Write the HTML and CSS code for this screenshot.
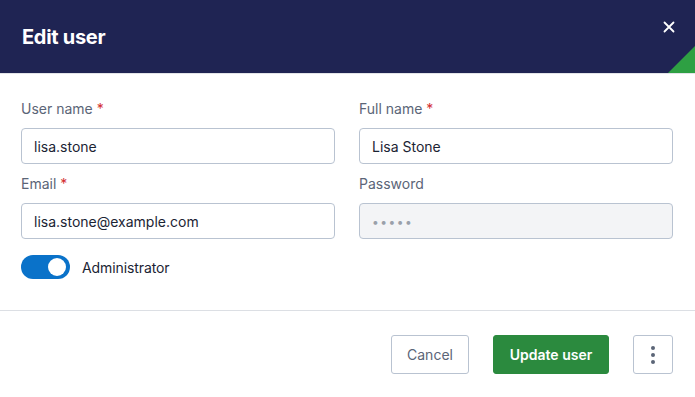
FILE: index.html
```html
<!DOCTYPE html>
<html>
<head>
<meta charset="utf-8">
<link rel="stylesheet" href="styles.css">
</head>
<body>
<div class="modal">
  <header class="modal-header">
    <h1 class="title">Edit user</h1>
    <button class="close" aria-label="Close">
      <svg width="12" height="12" viewBox="0 0 12 12"><path d="M1.5 1.5 L10.5 10.5 M10.5 1.5 L1.5 10.5" stroke="#fff" stroke-width="1.8" stroke-linecap="round"/></svg>
    </button>
    <span class="corner"></span>
  </header>
  <section class="modal-body">
    <div class="grid">
      <div class="field">
        <label class="label">User name <span class="req">*</span></label>
        <div class="input">lisa.stone</div>
      </div>
      <div class="field">
        <label class="label">Full name <span class="req">*</span></label>
        <div class="input">Lisa Stone</div>
      </div>
      <div class="field">
        <label class="label">Email <span class="req">*</span></label>
        <div class="input">lisa.stone@example.com</div>
      </div>
      <div class="field">
        <label class="label">Password</label>
        <div class="input disabled"><span class="dots">•••••</span></div>
      </div>
    </div>
    <div class="toggle-row">
      <span class="toggle"><span class="knob"></span></span>
      <span class="toggle-label">Administrator</span>
    </div>
  </section>
  <footer class="modal-footer">
    <button class="btn btn-secondary">Cancel</button>
    <button class="btn btn-primary">Update user</button>
    <button class="btn btn-icon" aria-label="More">
      <svg width="4" height="18" viewBox="0 0 4 18"><circle cx="2" cy="2" r="2" fill="#5b6577"/><circle cx="2" cy="9" r="2" fill="#5b6577"/><circle cx="2" cy="16" r="2" fill="#5b6577"/></svg>
    </button>
  </footer>
</div>
</body>
</html>
```

FILE: styles.css
```css
* { box-sizing: border-box; }
html, body { margin: 0; padding: 0; background: #fff; }
body { font-family: Inter, "Noto Sans", sans-serif; width: 695px; height: 397px; overflow: hidden; }
.modal { width: 695px; }
.modal-header {
  position: relative;
  height: 74px;
  background: #1f2453;
  border-bottom: 1px solid #e2e4e8;
  display: flex;
  align-items: center;
  padding: 0 22px;
  overflow: hidden;
}
.title {
  margin: 0;
  color: #fff;
  font-size: 20px;
  font-weight: 700;
  letter-spacing: -0.3px;
  line-height: 24px;
}
.close {
  position: absolute;
  top: 20px;
  right: 19px;
  width: 14px;
  height: 14px;
  padding: 0;
  border: 0;
  background: transparent;
  display: flex;
  align-items: center;
  justify-content: center;
}
.corner {
  position: absolute;
  right: 0;
  bottom: 0;
  width: 0;
  height: 0;
  border-style: solid;
  border-width: 0 0 27px 27px;
  border-color: transparent transparent #2ea043 transparent;
}
.modal-body {
  padding: 25px 22px 31px 21px;
  border-bottom: 1px solid #dcdfe4;
}
.grid {
  display: grid;
  grid-template-columns: 314px 314px;
  column-gap: 24px;
  row-gap: 10px;
}
.field { display: flex; flex-direction: column; }
.label {
  font-size: 14px;
  line-height: 20px;
  color: #5b6577;
  margin-bottom: 9px;
}
.req { color: #d32f2f; }
.input {
  height: 36px;
  border: 1px solid #b9c3d1;
  border-radius: 4px;
  padding: 0 12px;
  display: flex;
  align-items: center;
  font-size: 14px;
  color: #1b2434;
  background: #fff;
}
.input.disabled { background: #f3f4f6; }
.dots { color: #9aa0aa; font-size: 12px; letter-spacing: 1.5px; }
.toggle-row {
  display: flex;
  align-items: center;
  gap: 12px;
  margin-top: 16px;
}
.toggle {
  width: 49px;
  height: 24px;
  border-radius: 12px;
  background: #0a72c9;
  position: relative;
  display: inline-block;
}
.knob {
  position: absolute;
  top: 3px;
  right: 4px;
  width: 18px;
  height: 18px;
  border-radius: 50%;
  background: #fff;
}
.toggle-label { font-size: 14px; color: #1b2434; letter-spacing: -0.1px; }
.modal-footer {
  display: flex;
  justify-content: flex-end;
  align-items: center;
  gap: 24px;
  padding: 24px 22px 23px;
}
.btn {
  height: 39px;
  border-radius: 3px;
  font-family: inherit;
  font-size: 14px;
  display: flex;
  align-items: center;
  justify-content: center;
  padding: 0;
  cursor: pointer;
}
.btn-secondary {
  width: 78px;
  background: #fff;
  border: 1px solid #b9c3d1;
  color: #5b6577;
}
.btn-primary {
  width: 116px;
  background: #2b8a3e;
  border: 1px solid #2b8a3e;
  color: #fff;
  font-weight: 600;
}
.btn-icon {
  width: 40px;
  background: #fff;
  border: 1px solid #b9c3d1;
}
```
